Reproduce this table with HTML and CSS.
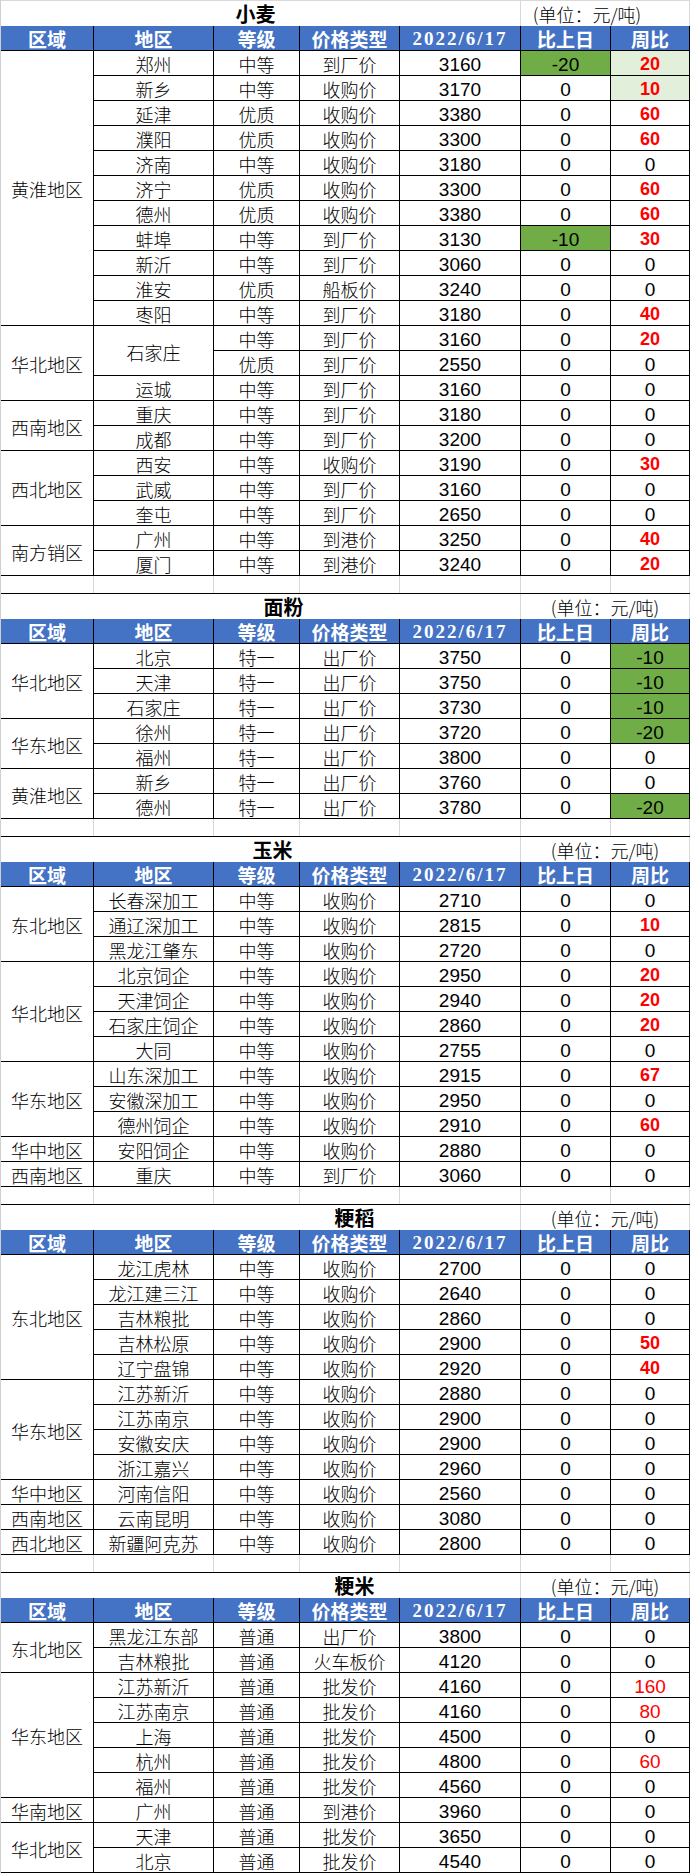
FILE: index.html
```html
<!DOCTYPE html>
<html lang="zh-CN">
<head>
<meta charset="utf-8">
<title>粮食价格</title>
<link rel="stylesheet" href="styles.css">
</head>
<body>
<div class="sheet">

<section class="sec first">
  <div class="title-row"><div class="title t-xm">小麦</div><div class="unit u-xm">(单位：元/吨)</div></div>
  <div class="grid">
    <div class="h">区域</div><div class="h">地区</div><div class="h">等级</div><div class="h">价格类型</div><div class="h hd">2022/6/17</div><div class="h">比上日</div><div class="h">周比</div>

    <div class="s11">黄淮地区</div>
    <div>郑州</div><div>中等</div><div>到厂价</div><div class="n">3160</div><div class="n dg">-20</div><div class="up lg">20</div>
    <div>新乡</div><div>中等</div><div>收购价</div><div class="n">3170</div><div class="n">0</div><div class="up lg">10</div>
    <div>延津</div><div>优质</div><div>收购价</div><div class="n">3380</div><div class="n">0</div><div class="up">60</div>
    <div>濮阳</div><div>优质</div><div>收购价</div><div class="n">3300</div><div class="n">0</div><div class="up">60</div>
    <div>济南</div><div>中等</div><div>收购价</div><div class="n">3180</div><div class="n">0</div><div class="n">0</div>
    <div>济宁</div><div>优质</div><div>收购价</div><div class="n">3300</div><div class="n">0</div><div class="up">60</div>
    <div>德州</div><div>优质</div><div>收购价</div><div class="n">3380</div><div class="n">0</div><div class="up">60</div>
    <div>蚌埠</div><div>中等</div><div>到厂价</div><div class="n">3130</div><div class="n dg">-10</div><div class="up">30</div>
    <div>新沂</div><div>中等</div><div>到厂价</div><div class="n">3060</div><div class="n">0</div><div class="n">0</div>
    <div>淮安</div><div>优质</div><div>船板价</div><div class="n">3240</div><div class="n">0</div><div class="n">0</div>
    <div>枣阳</div><div>中等</div><div>到厂价</div><div class="n">3180</div><div class="n">0</div><div class="up">40</div>

    <div class="s3">华北地区</div>
    <div class="s2">石家庄</div><div>中等</div><div>到厂价</div><div class="n">3160</div><div class="n">0</div><div class="up">20</div>
    <div>优质</div><div>到厂价</div><div class="n">2550</div><div class="n">0</div><div class="n">0</div>
    <div>运城</div><div>中等</div><div>到厂价</div><div class="n">3160</div><div class="n">0</div><div class="n">0</div>

    <div class="s2">西南地区</div>
    <div>重庆</div><div>中等</div><div>到厂价</div><div class="n">3180</div><div class="n">0</div><div class="n">0</div>
    <div>成都</div><div>中等</div><div>到厂价</div><div class="n">3200</div><div class="n">0</div><div class="n">0</div>

    <div class="s3">西北地区</div>
    <div>西安</div><div>中等</div><div>收购价</div><div class="n">3190</div><div class="n">0</div><div class="up">30</div>
    <div>武威</div><div>中等</div><div>到厂价</div><div class="n">3160</div><div class="n">0</div><div class="n">0</div>
    <div>奎屯</div><div>中等</div><div>到厂价</div><div class="n">2650</div><div class="n">0</div><div class="n">0</div>

    <div class="s2">南方销区</div>
    <div>广州</div><div>中等</div><div>到港价</div><div class="n">3250</div><div class="n">0</div><div class="up">40</div>
    <div>厦门</div><div>中等</div><div>到港价</div><div class="n">3240</div><div class="n">0</div><div class="up">20</div>
  </div>
  <div class="blank"><div></div><div></div><div></div><div></div><div></div><div></div><div></div></div>
</section>

<section class="sec">
  <div class="title-row"><div class="title t-mf">面粉</div><div class="unit">(单位：元/吨)</div></div>
  <div class="grid">
    <div class="h">区域</div><div class="h">地区</div><div class="h">等级</div><div class="h">价格类型</div><div class="h hd">2022/6/17</div><div class="h">比上日</div><div class="h">周比</div>

    <div class="s3">华北地区</div>
    <div>北京</div><div>特一</div><div>出厂价</div><div class="n">3750</div><div class="n">0</div><div class="n dg">-10</div>
    <div>天津</div><div>特一</div><div>出厂价</div><div class="n">3750</div><div class="n">0</div><div class="n dg">-10</div>
    <div>石家庄</div><div>特一</div><div>出厂价</div><div class="n">3730</div><div class="n">0</div><div class="n dg">-10</div>

    <div class="s2">华东地区</div>
    <div>徐州</div><div>特一</div><div>出厂价</div><div class="n">3720</div><div class="n">0</div><div class="n dg">-20</div>
    <div>福州</div><div>特一</div><div>出厂价</div><div class="n">3800</div><div class="n">0</div><div class="n">0</div>

    <div class="s2">黄淮地区</div>
    <div>新乡</div><div>特一</div><div>出厂价</div><div class="n">3760</div><div class="n">0</div><div class="n">0</div>
    <div>德州</div><div>特一</div><div>出厂价</div><div class="n">3780</div><div class="n">0</div><div class="n dg">-20</div>
  </div>
  <div class="blank"><div></div><div></div><div></div><div></div><div></div><div></div><div></div></div>
</section>

<section class="sec">
  <div class="title-row"><div class="title t-ym">玉米</div><div class="unit">(单位：元/吨)</div></div>
  <div class="grid">
    <div class="h">区域</div><div class="h">地区</div><div class="h">等级</div><div class="h">价格类型</div><div class="h hd">2022/6/17</div><div class="h">比上日</div><div class="h">周比</div>

    <div class="s3">东北地区</div>
    <div>长春深加工</div><div>中等</div><div>收购价</div><div class="n">2710</div><div class="n">0</div><div class="n">0</div>
    <div>通辽深加工</div><div>中等</div><div>收购价</div><div class="n">2815</div><div class="n">0</div><div class="up">10</div>
    <div>黑龙江肇东</div><div>中等</div><div>收购价</div><div class="n">2720</div><div class="n">0</div><div class="n">0</div>

    <div class="s4">华北地区</div>
    <div>北京饲企</div><div>中等</div><div>收购价</div><div class="n">2950</div><div class="n">0</div><div class="up">20</div>
    <div>天津饲企</div><div>中等</div><div>收购价</div><div class="n">2940</div><div class="n">0</div><div class="up">20</div>
    <div>石家庄饲企</div><div>中等</div><div>收购价</div><div class="n">2860</div><div class="n">0</div><div class="up">20</div>
    <div>大同</div><div>中等</div><div>收购价</div><div class="n">2755</div><div class="n">0</div><div class="n">0</div>

    <div class="s3">华东地区</div>
    <div>山东深加工</div><div>中等</div><div>收购价</div><div class="n">2915</div><div class="n">0</div><div class="up">67</div>
    <div>安徽深加工</div><div>中等</div><div>收购价</div><div class="n">2950</div><div class="n">0</div><div class="n">0</div>
    <div>德州饲企</div><div>中等</div><div>收购价</div><div class="n">2910</div><div class="n">0</div><div class="up">60</div>

    <div>华中地区</div>
    <div>安阳饲企</div><div>中等</div><div>收购价</div><div class="n">2880</div><div class="n">0</div><div class="n">0</div>

    <div>西南地区</div>
    <div>重庆</div><div>中等</div><div>到厂价</div><div class="n">3060</div><div class="n">0</div><div class="n">0</div>
  </div>
  <div class="blank"><div></div><div></div><div></div><div></div><div></div><div></div><div></div></div>
</section>

<section class="sec">
  <div class="title-row"><div class="title t-jd">粳稻</div><div class="unit">(单位：元/吨)</div></div>
  <div class="grid">
    <div class="h">区域</div><div class="h">地区</div><div class="h">等级</div><div class="h">价格类型</div><div class="h hd">2022/6/17</div><div class="h">比上日</div><div class="h">周比</div>

    <div class="s5">东北地区</div>
    <div>龙江虎林</div><div>中等</div><div>收购价</div><div class="n">2700</div><div class="n">0</div><div class="n">0</div>
    <div>龙江建三江</div><div>中等</div><div>收购价</div><div class="n">2640</div><div class="n">0</div><div class="n">0</div>
    <div>吉林粮批</div><div>中等</div><div>收购价</div><div class="n">2860</div><div class="n">0</div><div class="n">0</div>
    <div>吉林松原</div><div>中等</div><div>收购价</div><div class="n">2900</div><div class="n">0</div><div class="up">50</div>
    <div>辽宁盘锦</div><div>中等</div><div>收购价</div><div class="n">2920</div><div class="n">0</div><div class="up">40</div>

    <div class="s4">华东地区</div>
    <div>江苏新沂</div><div>中等</div><div>收购价</div><div class="n">2880</div><div class="n">0</div><div class="n">0</div>
    <div>江苏南京</div><div>中等</div><div>收购价</div><div class="n">2900</div><div class="n">0</div><div class="n">0</div>
    <div>安徽安庆</div><div>中等</div><div>收购价</div><div class="n">2900</div><div class="n">0</div><div class="n">0</div>
    <div>浙江嘉兴</div><div>中等</div><div>收购价</div><div class="n">2960</div><div class="n">0</div><div class="n">0</div>

    <div>华中地区</div>
    <div>河南信阳</div><div>中等</div><div>收购价</div><div class="n">2560</div><div class="n">0</div><div class="n">0</div>
    <div>西南地区</div>
    <div>云南昆明</div><div>中等</div><div>收购价</div><div class="n">3080</div><div class="n">0</div><div class="n">0</div>
    <div>西北地区</div>
    <div>新疆阿克苏</div><div>中等</div><div>收购价</div><div class="n">2800</div><div class="n">0</div><div class="n">0</div>
  </div>
  <div class="blank"><div></div><div></div><div></div><div></div><div></div><div></div><div></div></div>
</section>

<section class="sec">
  <div class="title-row"><div class="title t-jm">粳米</div><div class="unit">(单位：元/吨)</div></div>
  <div class="grid">
    <div class="h">区域</div><div class="h">地区</div><div class="h">等级</div><div class="h">价格类型</div><div class="h hd">2022/6/17</div><div class="h">比上日</div><div class="h">周比</div>

    <div class="s2">东北地区</div>
    <div>黑龙江东部</div><div>普通</div><div>出厂价</div><div class="n">3800</div><div class="n">0</div><div class="n">0</div>
    <div>吉林粮批</div><div>普通</div><div>火车板价</div><div class="n">4120</div><div class="n">0</div><div class="n">0</div>

    <div class="s5">华东地区</div>
    <div>江苏新沂</div><div>普通</div><div>批发价</div><div class="n">4160</div><div class="n">0</div><div class="n red">160</div>
    <div>江苏南京</div><div>普通</div><div>批发价</div><div class="n">4160</div><div class="n">0</div><div class="n red">80</div>
    <div>上海</div><div>普通</div><div>批发价</div><div class="n">4500</div><div class="n">0</div><div class="n">0</div>
    <div>杭州</div><div>普通</div><div>批发价</div><div class="n">4800</div><div class="n">0</div><div class="n red">60</div>
    <div>福州</div><div>普通</div><div>批发价</div><div class="n">4560</div><div class="n">0</div><div class="n">0</div>

    <div>华南地区</div>
    <div>广州</div><div>普通</div><div>到港价</div><div class="n">3960</div><div class="n">0</div><div class="n">0</div>

    <div class="s2">华北地区</div>
    <div>天津</div><div>普通</div><div>批发价</div><div class="n">3650</div><div class="n">0</div><div class="n">0</div>
    <div>北京</div><div>普通</div><div>批发价</div><div class="n">4540</div><div class="n">0</div><div class="n">0</div>
  </div>
</section>

</div>
</body>
</html>
```

FILE: styles.css
```css
* {
  box-sizing: border-box;
  margin: 0;
  padding: 0;
}

body {
  margin: 0;
  background: #ffffff;
  color: #000000;
  font-family: "Noto Sans CJK SC", "Noto Sans", sans-serif;
}

.sheet {
  width: 690px;
  border-left: 1px solid #cfcfcf;
}

/* ---------- title row ---------- */
.title-row {
  display: grid;
  grid-template-columns: 520px 169px;
  height: 26px;
  border-top: 1px solid #000000;
}

.first .title-row {
  border-top-color: #d9d9d9;
}

.title,
.unit {
  display: flex;
  align-items: center;
  justify-content: center;
  border-right: 1px solid #d9d9d9;
  line-height: 1;
  white-space: nowrap;
}

.title {
  font-size: 20px;
  font-weight: 700;
}

.unit {
  font-size: 18px;
  font-weight: 300;
}

.t-xm { padding-right: 10px; }
.t-mf { padding-left: 46px; }
.t-ym { padding-left: 24px; }
.t-jd,
.t-jm { padding-left: 188px; }
.u-xm { padding-right: 36px; }

/* ---------- data grid ---------- */
.grid {
  display: grid;
  grid-template-columns: 93px 120px 86px 100px 121px 90px 79px;
  grid-auto-rows: 25px;
}

.grid > div {
  display: flex;
  align-items: center;
  justify-content: center;
  border-right: 1px solid #000000;
  border-bottom: 1px solid #000000;
  font-size: 18px;
  font-weight: 300;
  line-height: 1;
  white-space: nowrap;
  padding-top: 2px;
}

.grid > .h {
  background: #4472c4;
  color: #ffffff;
  font-weight: 700;
  font-size: 19px;
  padding-top: 0;
}

.grid > .hd {
  font-family: "Liberation Serif", serif;
  font-size: 19px;
  letter-spacing: 2px;
}

.grid > .n {
  font-family: "Liberation Sans Narrow", "Liberation Sans", sans-serif;
  font-size: 19px;
  font-weight: 400;
}

.grid > .up {
  font-family: "Liberation Sans", sans-serif;
  font-size: 18px;
  font-weight: 700;
  color: #ff0000;
}

.grid > .red {
  color: #ff0000;
}

.grid > .dg {
  background: #70ad47;
}

.grid > .lg {
  background: #e2efda;
}

.s2 { grid-row: span 2; }
.s3 { grid-row: span 3; }
.s4 { grid-row: span 4; }
.s5 { grid-row: span 5; }
.s11 { grid-row: span 11; }

/* ---------- blank spacer row ---------- */
.blank {
  display: grid;
  grid-template-columns: 93px 120px 86px 100px 121px 90px 79px;
  height: 17px;
}

.blank > div {
  border-right: 1px solid #d9d9d9;
}
```
